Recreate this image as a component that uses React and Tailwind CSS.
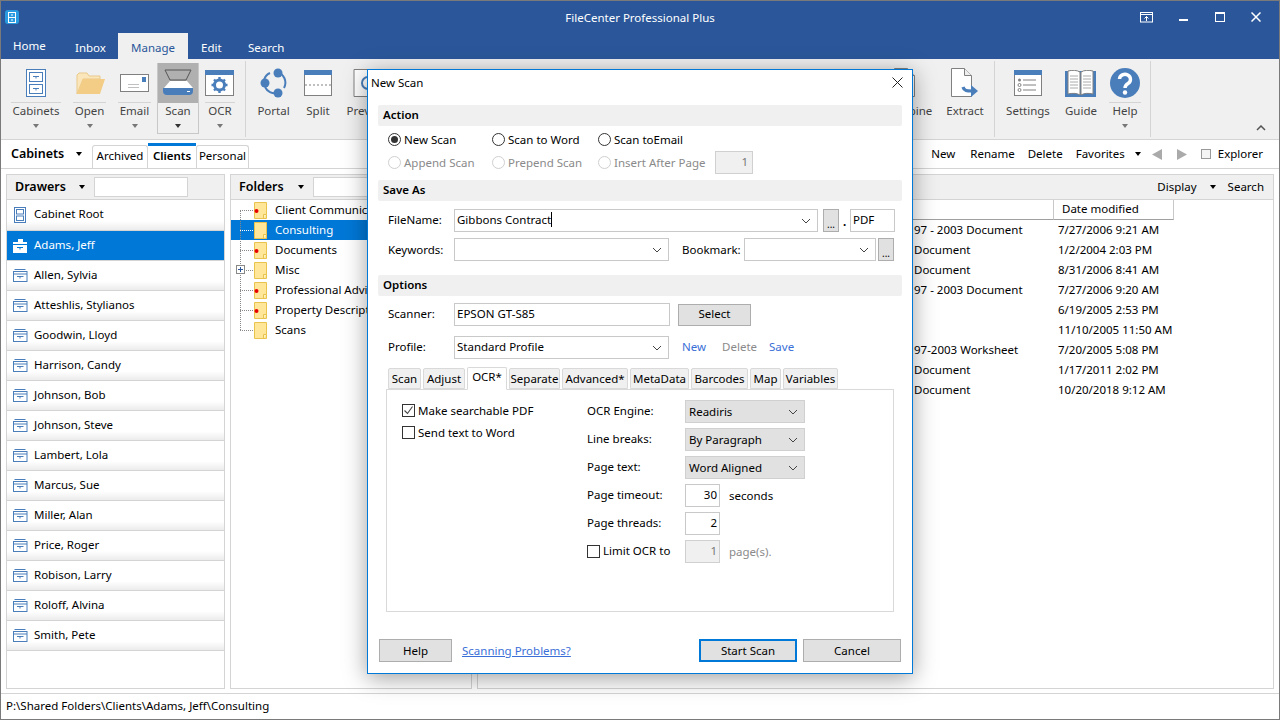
import React from "react";

const BLUE = "#4a7ebb";

function Caret({ className = "" }) {
  return <span className={"inline-block w-0 h-0 border-l-[3.5px] border-r-[3.5px] border-t-[4px] border-l-transparent border-r-transparent " + className} />;
}

function Chevron({ className = "" }) {
  return (
    <svg width="10" height="6" viewBox="0 0 10 6" className={className}>
      <path d="M1 1l4 4 4-4" fill="none" stroke="#444" strokeWidth="1" />
    </svg>
  );
}

/* ---------- ribbon icons ---------- */
const CabinetIcon = () => (
  <svg width="22" height="30" viewBox="0 0 22 30">
    <rect x="1.5" y="1.5" width="19" height="27" fill="#fff" stroke={BLUE} />
    <rect x="4.5" y="4.5" width="13" height="9" fill="#fff" stroke={BLUE} />
    <rect x="4.5" y="16.5" width="13" height="9" fill="#fff" stroke={BLUE} />
    <path d="M8 8.5h6M11 8.5v2M8 20.5h6M11 20.5v2" stroke={BLUE} fill="none" />
  </svg>
);
const OpenIcon = () => (
  <svg width="32" height="26" viewBox="0 0 32 26">
    <path d="M3 24V5l2-2h8l2 3h11v3H9L3 24z" fill="#fbe6bb" stroke="#e9c98a" />
    <path d="M3 24l6-15h22l-5 15H3z" fill="#f3cd85" />
  </svg>
);
const EmailIcon = () => (
  <svg width="30" height="20" viewBox="0 0 30 20">
    <rect x="0.5" y="1.5" width="28" height="17" fill="#fff" stroke="#808080" />
    <rect x="22" y="4" width="4" height="5" fill={BLUE} />
    <path d="M8 11.5h11M8 14.5h11" stroke="#c0c0c0" />
  </svg>
);
const ScanIcon = () => (
  <svg width="32" height="30" viewBox="0 0 32 30">
    <path d="M3 2h26l-5 10H8z" fill="none" stroke="#555" />
    <path d="M2 20l6-7h17l6 7z" fill="#fff" />
    <path d="M1 20h30v3a4 4 0 0 1-4 4H5a4 4 0 0 1-4-4z" fill={BLUE} />
    <rect x="25" y="23" width="3" height="1" fill="#fff" />
  </svg>
);
const OcrIcon = () => (
  <svg width="30" height="26" viewBox="0 0 30 26">
    <rect x="0.5" y="0.5" width="28" height="25" fill="#fff" stroke="#808080" />
    <rect x="0" y="0" width="29" height="5" fill={BLUE} />
    <circle cx="14.5" cy="15" r="5" fill="none" stroke={BLUE} strokeWidth="3" />
    <path d="M14.5 7v3M14.5 20v3M6.5 15h3M19.5 15h3M9 9.5l2 2M18 18.5l2 2M20 9.5l-2 2M11 18.5l-2 2" stroke={BLUE} strokeWidth="2.4" />
  </svg>
);
const PortalIcon = () => (
  <svg width="28" height="30" viewBox="0 0 28 30">
    <path d="M17 4a11 11 0 0 1 7 16M17 25a11 11 0 0 1-12-6M4 12a11 11 0 0 1 6-7" fill="none" stroke={BLUE} strokeWidth="2" />
    <circle cx="18" cy="5" r="4.5" fill={BLUE} />
    <circle cx="5" cy="15" r="4.5" fill={BLUE} />
    <circle cx="18" cy="25" r="4.5" fill={BLUE} />
  </svg>
);
const SplitIcon = () => (
  <svg width="28" height="26" viewBox="0 0 28 26">
    <rect x="0.5" y="0.5" width="27" height="25" fill="#fff" stroke="#808080" />
    <rect x="0" y="0" width="28" height="5" fill={BLUE} />
    <path d="M1 15h26" stroke="#808080" strokeDasharray="2 2" />
  </svg>
);
const PreviewIcon = () => (
  <svg width="30" height="28" viewBox="0 0 30 28">
    <path d="M1 .5h22v27H1z" fill="#fff" stroke="#808080" />
    <circle cx="15" cy="14" r="6" fill="none" stroke={BLUE} strokeWidth="2" />
  </svg>
);
const DocIcon = ({ arrow }) => (
  <svg width="30" height="30" viewBox="0 0 30 30">
    <path d="M1.5.5h13l7 7v21h-20z" fill="#fff" stroke="#808080" />
    <path d="M14.5.5v7h7" fill="#eee" stroke="#808080" />
    {arrow && (
      <>
        <path d="M13 19c1 4 4 4 9 4" fill="none" stroke={BLUE} strokeWidth="3.2" />
        <path d="M21 17l7 6-7 6z" fill={BLUE} />
      </>
    )}
  </svg>
);
const SettingsIcon = () => (
  <svg width="28" height="26" viewBox="0 0 28 26">
    <rect x="0.5" y="0.5" width="27" height="25" fill="#fff" stroke="#808080" />
    <rect x="0" y="0" width="28" height="5" fill={BLUE} />
    <circle cx="5.5" cy="10" r="1.5" fill="#808080" />
    <circle cx="5.5" cy="15" r="1.5" fill="none" stroke="#808080" />
    <circle cx="5.5" cy="20" r="1.5" fill="none" stroke="#808080" />
    <path d="M9 10h13M9 15h13M9 20h13" stroke="#808080" />
  </svg>
);
const GuideIcon = () => (
  <svg width="32" height="27" viewBox="0 0 32 27">
    <rect x="0" y="1" width="31" height="26" fill={BLUE} />
    <path d="M3 1c4-1 9-1 12 1v23c-3-2-8-2-12-1zM28 1c-4-1-9-1-12 1v23c3-2 8-2 12-1z" fill="#fff" stroke="#808080" />
    <path d="M5 6h8M5 9h8M5 12h8M5 15h8M5 18h8M18 6h8M18 9h8M18 12h8M18 15h8M18 18h8" stroke="#aaa" />
  </svg>
);
const HelpIcon = () => (
  <svg width="30" height="30" viewBox="0 0 30 30">
    <circle cx="15" cy="15" r="15" fill={BLUE} />
    <path d="M9.5 11a5.5 5 0 1 1 8.5 4.5c-2 1.3-3 2-3 4.5" fill="none" stroke="#fff" strokeWidth="3.4" />
    <circle cx="15" cy="24.5" r="2.2" fill="#fff" />
  </svg>
);

function RibbonItem({ w, icon, label, caret, active, line }) {
  return (
    <div className={w + " shrink-0 h-[71px] flex flex-col items-center " + (active ? "border border-t-0 border-[#c8c8c8]" : "")}>
      <div className={"w-full h-[40px] shrink-0 flex items-center justify-center " + (active ? "bg-[#b0b0b0]" : "") + (line ? " border-b border-[#d4d4d4]" : "")}>
        {icon}
      </div>
      <div className="h-[18px] leading-[15px] text-[11.5px] text-[#444] whitespace-nowrap">{label}</div>
      {caret && <Caret className={"mt-[3px] " + (active ? "border-t-[#333]" : "border-t-[#777]")} />}
    </div>
  );
}

const RibbonSep = () => <div className="w-px h-[76px] -mt-[2px] shrink-0 bg-[#d4d4d4]" />;

/* ---------- list icons ---------- */
const DrawerIcon = ({ selected }) =>
  selected ? (
    <svg width="15" height="14" viewBox="0 0 15 14" className="shrink-0">
      <path d="M5 0h5v3H5z" fill="#fff" />
      <path d="M0 3h14v11H0z" fill="#fff" />
      <path d="M0 5.5h14" stroke="#0078d7" />
      <path d="M4 8.5h6M7 8.5v2" stroke="#0078d7" />
    </svg>
  ) : (
    <svg width="15" height="13" viewBox="0 0 15 13" className="shrink-0">
      <path d="M1.5.5h11" stroke={BLUE} />
      <rect x="0.5" y="2.5" width="13.5" height="10" fill="#fff" stroke={BLUE} />
      <path d="M0 5h14M4 7.5h6.5M7 7.5v2" stroke={BLUE} />
    </svg>
  );

const RootIcon = () => (
  <svg width="13" height="16" viewBox="0 0 13 16" className="shrink-0">
    <rect x="0.5" y="0.5" width="11" height="15" fill="#fff" stroke={BLUE} />
    <rect x="2.5" y="2.5" width="7" height="4.5" fill="#fff" stroke={BLUE} />
    <rect x="2.5" y="9" width="7" height="4.5" fill="#fff" stroke={BLUE} />
  </svg>
);

const FolderIcon = ({ dot }) => (
  <svg width="14" height="17" viewBox="0 0 14 17" className="shrink-0 relative">
    <path d="M.5.5h12v16H.5z" fill="#ffe699" stroke="#e8c44f" />
    <path d="M9.5 16.5v-4h3" fill="#fff2c4" stroke="#e8c44f" />
    {dot && <circle cx="2.5" cy="9" r="2" fill="#e80000" />}
  </svg>
);

const drawers = ["Allen, Sylvia", "Atteshlis, Stylianos", "Goodwin, Lloyd", "Harrison, Candy", "Johnson, Bob", "Johnson, Steve", "Lambert, Lola", "Marcus, Sue", "Miller, Alan", "Price, Roger", "Robison, Larry", "Roloff, Alvina", "Smith, Pete"];

const folders = [
  { n: "Client Communications", d: true },
  { n: "Consulting", s: true },
  { n: "Documents", d: true },
  { n: "Misc", p: true },
  { n: "Professional Advisors", d: true },
  { n: "Property Descriptions", d: true },
  { n: "Scans" },
];

const files = [
  ["97 - 2003 Document", "7/27/2006 9:21 AM"],
  ["Document", "1/2/2004 2:03 PM"],
  ["Document", "8/31/2006 8:41 AM"],
  ["97 - 2003 Document", "7/27/2006 9:20 AM"],
  ["", "6/19/2005 2:53 PM"],
  ["", "11/10/2005 11:50 AM"],
  ["97-2003 Worksheet", "7/20/2005 5:08 PM"],
  ["Document", "1/17/2011 2:02 PM"],
  ["Document", "10/20/2018 9:12 AM"],
];

/* ---------- dialog bits ---------- */
function Section({ children }) {
  return <div className="h-[21px] leading-[20px] mx-[10px] pl-[5px] bg-[#f0f0f0] rounded-[2px] text-[11.5px] font-semibold text-black">{children}</div>;
}

function Radio({ w, label, checked, disabled }) {
  return (
    <div className={w + " flex items-center gap-[3px] text-[11.5px] " + (disabled ? "text-[#8a8a8a]" : "text-black")}>
      <span className={"w-[13px] h-[13px] rounded-full border bg-white flex items-center justify-center shrink-0 " + (disabled ? "border-[#cfcfcf]" : "border-[#333]")}>
        {checked && <span className="w-[7px] h-[7px] rounded-full bg-[#333]" />}
      </span>
      <span className="whitespace-nowrap">{label}</span>
    </div>
  );
}

function Check({ label, checked }) {
  return (
    <div className="h-[13px] flex items-center gap-[3px] text-[11.5px] text-black">
      <span className="w-[13px] h-[13px] border border-[#333] bg-white flex items-center justify-center shrink-0">
        {checked && (
          <svg width="11" height="11" viewBox="0 0 11 11">
            <path d="M1.5 5.5l3 3 5-7" fill="none" stroke="#444" strokeWidth="1.1" />
          </svg>
        )}
      </span>
      <span className="whitespace-nowrap">{label}</span>
    </div>
  );
}

function Combo({ w, value }) {
  return (
    <div className={w + " h-[23px] border border-[#c9c9c9] bg-white flex items-center pl-[2px] pr-[6px] text-[11.5px] text-black shrink-0"}>
      <span className="flex-1 whitespace-nowrap flex items-center pb-[2px]">{value}</span>
      <Chevron />
    </div>
  );
}

function GrayCombo({ value }) {
  return (
    <div className="w-[120px] h-[23px] border border-[#d0d0d0] bg-[#e1e1e1] flex items-center pl-[3px] pr-[6px] text-[11.5px] text-black shrink-0">
      <span className="flex-1 whitespace-nowrap">{value}</span>
      <Chevron />
    </div>
  );
}

function Btn({ w, children, cls = "" }) {
  return <div className={w + " h-[23px] shrink-0 bg-[#e1e1e1] border border-[#adadad] flex items-center justify-center text-[11.5px] text-black " + cls}>{children}</div>;
}

const Dots = () => <div className="w-[16px] h-[23px] shrink-0 bg-[#e1e1e1] border border-[#adadad] flex items-end justify-center text-[10px] leading-[14px] text-black">...</div>;

function Tab({ w, label, active }) {
  return (
    <div className={w + " shrink-0 border border-[#d9d9d9] rounded-t-[2px] flex items-center justify-center text-[11.5px] text-black whitespace-nowrap " + (active ? "h-[23px] bg-white border-b-white -mb-px pb-[3px] relative" : "h-[21px] bg-[#f0f0f0]")}>
      {label}
    </div>
  );
}

function OcrRow({ label, children }) {
  return (
    <div className="h-[23px] mb-[5px] flex items-center text-[11.5px] text-black">
      <div className="w-[98px] shrink-0 whitespace-nowrap pb-[1px]">{label}</div>
      {children}
    </div>
  );
}

function Dialog() {
  return (
    <div className="absolute left-[366px] top-[68px] w-[546px] h-[605px] bg-white border border-[#0078d7] shadow-[0_4px_22px_rgba(0,0,0,0.38)]">
      <div className="h-[25px] flex items-center justify-between pl-[3px] pr-[9px] text-[11.5px] text-black">
        <span>New Scan</span>
        <svg width="11" height="11" viewBox="0 0 11 11">
          <path d="M.5.5l10 10M10.5.5l-10 10" stroke="#222" strokeWidth="1" fill="none" />
        </svg>
      </div>
      <div className="h-[10px]" />
      <Section>Action</Section>
      <div className="pl-[20px] pt-[2px]">
        <div className="flex h-[23px] items-center">
          <Radio w="w-[104px]" label="New Scan" checked />
          <Radio w="w-[106px]" label="Scan to Word" />
          <Radio w="w-[117px]" label="Scan toEmail" />
        </div>
        <div className="flex h-[23px] items-center">
          <Radio w="w-[104px]" label="Append Scan" disabled />
          <Radio w="w-[106px]" label="Prepend Scan" disabled />
          <Radio w="w-[117px]" label="Insert After Page" disabled />
          <div className="w-[38px] h-[23px] border border-[#d0d0d0] bg-[#f0f0f0] text-[11.5px] text-[#777] text-right pr-[4px] leading-[20px]">1</div>
        </div>
      </div>
      <div className="h-[6px]" />
      <Section>Save As</Section>
      <div className="pl-[20px] pt-[8px]">
        <div className="flex items-center h-[23px] text-[11.5px] text-black">
          <div className="w-[66px] shrink-0 pb-[1px]">FileName:</div>
          <Combo w="w-[364px]" value={<><span>Gibbons Contract</span><span className="w-px h-[15px] bg-black" /></>} />
          <div className="ml-[5px]"><Dots /></div>
          <div className="w-[11px] text-center font-bold leading-[26px] pt-[2px]">.</div>
          <div className="w-[45px] h-[23px] border border-[#c9c9c9] pl-[2px] leading-[19px]">PDF</div>
        </div>
        <div className="flex items-center h-[23px] mt-[6px] text-[11.5px] text-black">
          <div className="w-[66px] shrink-0">Keywords:</div>
          <Combo w="w-[215px]" value="" />
          <div className="w-[75px] pl-[13px] shrink-0">Bookmark:</div>
          <Combo w="w-[132px]" value="" />
          <div className="ml-[2px]"><Dots /></div>
        </div>
      </div>
      <div className="h-[14px]" />
      <Section>Options</Section>
      <div className="pl-[20px] pt-[7px]">
        <div className="flex items-center h-[23px] text-[11.5px] text-black">
          <div className="w-[66px] shrink-0 pb-[1px]">Scanner:</div>
          <div className="w-[216px] h-[23px] border border-[#c9c9c9] pl-[2px] leading-[19px]">EPSON GT-S85</div>
          <Btn w="w-[73px]" cls="ml-[8px] !h-[22px] pb-[1px]">Select</Btn>
        </div>
        <div className="flex items-center h-[23px] mt-[10px] text-[11.5px] text-black">
          <div className="w-[66px] shrink-0 pb-[2px]">Profile:</div>
          <Combo w="w-[215px]" value="Standard Profile" />
          <span className="ml-[13px] text-[#3a6fd8] pb-[1px]">New</span>
          <span className="ml-[16px] text-[#8a8a8a] pb-[1px]">Delete</span>
          <span className="ml-[12px] text-[#3a6fd8] pb-[1px]">Save</span>
        </div>
      </div>
      <div className="flex items-end gap-[2px] pl-[20px] h-[22px] mt-[8px] relative z-10">
        <Tab w="w-[33px]" label="Scan" />
        <Tab w="w-[42px]" label="Adjust" />
        <Tab w="w-[40px]" label="OCR*" active />
        <Tab w="w-[51px]" label="Separate" />
        <Tab w="w-[66px]" label="Advanced*" />
        <Tab w="w-[59px]" label="MetaData" />
        <Tab w="w-[57px]" label="Barcodes" />
        <Tab w="w-[31px]" label="Map" />
        <Tab w="w-[55px]" label="Variables" />
      </div>
      <div className="ml-[18px] w-[508px] h-[223px] border border-[#d9d9d9] flex pt-[10px]">
        <div className="w-[200px] pl-[15px] pt-[4px] shrink-0">
          <Check label="Make searchable PDF" checked />
          <div className="h-[9px]" />
          <Check label="Send text to Word" />
        </div>
        <div>
          <OcrRow label="OCR Engine:"><GrayCombo value="Readiris" /></OcrRow>
          <OcrRow label="Line breaks:"><GrayCombo value="By Paragraph" /></OcrRow>
          <OcrRow label="Page text:"><GrayCombo value="Word Aligned" /></OcrRow>
          <OcrRow label="Page timeout:">
            <div className="w-[35px] h-[23px] border border-[#c9c9c9] text-right pr-[2px] leading-[19px]">30</div>
            <span className="ml-[9px]">seconds</span>
          </OcrRow>
          <OcrRow label="Page threads:">
            <div className="w-[35px] h-[23px] border border-[#c9c9c9] text-right pr-[2px] leading-[19px]">2</div>
          </OcrRow>
          <OcrRow label={<Check label="Limit OCR to" />}>
            <div className="w-[35px] h-[23px] border border-[#d0d0d0] bg-[#f0f0f0] text-[#777] text-right pr-[2px] leading-[19px]">1</div>
            <span className="ml-[9px] text-[#8a8a8a]">page(s).</span>
          </OcrRow>
        </div>
      </div>
      <div className="flex items-center mt-[27px] pl-[11px] text-[11.5px]">
        <Btn w="w-[73px]">Help</Btn>
        <span className="ml-[10px] text-[#3a6fd8] underline">Scanning Problems?</span>
        <div className="flex-1" />
        <Btn w="w-[98px]" cls="!border-2 !border-[#0078d7]">Start Scan</Btn>
        <Btn w="w-[98px]" cls="ml-[6px] mr-[11px]">Cancel</Btn>
      </div>
    </div>
  );
}

export default function App() {
  return (
    <div className="relative w-[1280px] h-[720px] overflow-hidden border border-[#7a7a7a] bg-[#f0f0f0] flex flex-col text-black font-['Noto_Sans','Open_Sans',sans-serif] text-[11.5px]">
      {/* title */}
      <div className="h-[32px] shrink-0 bg-[#2b579a] flex items-center">
        <div className="w-[150px] shrink-0 pl-[4px]">
          <div className="w-[14px] h-[14px] rounded-[3px] bg-[#2a9be0] flex items-center justify-center">
            <svg width="8" height="11" viewBox="0 0 8 11">
              <rect x=".5" y=".5" width="7" height="10" fill="none" stroke="#fff" />
              <path d="M.5 5.5h7M3 3h2M3 8h2" stroke="#fff" />
            </svg>
          </div>
        </div>
        <div className="flex-1 text-center text-white text-[11.5px] pt-[1px]">FileCenter Professional Plus</div>
        <div className="w-[150px] shrink-0 flex items-center justify-end pr-[18px]">
          <svg width="14" height="11" viewBox="0 0 14 11">
            <rect x=".5" y=".5" width="12" height="9.5" fill="none" stroke="#fff" />
            <path d="M1 2.5h11" stroke="#fff" />
            <path d="M6.5 9V4.5M4.5 6.5l2-2 2 2" stroke="#fff" fill="none" />
          </svg>
          <div className="ml-[25px] w-[9px] h-[2px] bg-white mt-[5px]" />
          <div className="ml-[27px] w-[10px] h-[10px] border border-white border-t-2" />
          <svg width="10" height="10" viewBox="0 0 10 10" className="ml-[26px]">
            <path d="M.5.5l9 9M9.5.5l-9 9" stroke="#fff" strokeWidth="1.5" />
          </svg>
        </div>
      </div>
      {/* ribbon tabs */}
      <div className="h-[26px] shrink-0 bg-[#2b579a] flex items-end text-white text-[11.5px]">
        <div className="w-[74px] pl-[12px] h-full leading-[25px]">Home</div>
        <div className="w-[43px] h-full leading-[29px]">Inbox</div>
        <div className="w-[70px] h-full bg-[#f0f0f0] text-[#2b579a] text-center leading-[29px]">Manage</div>
        <div className="w-[47px] h-full pl-[13px] leading-[29px]">Edit</div>
        <div className="h-full leading-[29px] pl-[13px]">Search</div>
      </div>
      {/* ribbon */}
      <div className="h-[81px] shrink-0 bg-[#f0f0f0] border-b border-[#d4d4d4] flex items-start pt-[4px] pl-[10px] pr-[8px]">
        <RibbonItem w="w-[50px]" icon={<CabinetIcon />} label="Cabinets" caret line />
        <div className="w-[12px] shrink-0" />
        <RibbonItem w="w-[33px]" icon={<OpenIcon />} label="Open" caret line />
        <div className="w-[12px] shrink-0" />
        <RibbonItem w="w-[33px]" icon={<EmailIcon />} label="Email" caret line />
        <div className="w-[6px] shrink-0" />
        <RibbonItem w="w-[42px]" icon={<ScanIcon />} label="Scan" caret active />
        <div className="w-[6px] shrink-0" />
        <RibbonItem w="w-[30px]" icon={<OcrIcon />} label="OCR" caret line />
        <div className="w-[10px] shrink-0" />
        <RibbonSep />
        <div className="w-[12px] shrink-0" />
        <RibbonItem w="w-[31px]" icon={<PortalIcon />} label="Portal" />
        <div className="w-[15px] shrink-0" />
        <RibbonItem w="w-[28px]" icon={<SplitIcon />} label="Split" />
        <div className="w-[13px] shrink-0" />
        <RibbonItem w="w-[45px]" icon={<PreviewIcon />} label="Preview" />
        <div className="flex-1" />
        <RibbonItem w="w-[50px]" icon={<DocIcon />} label="Combine" />
        <div className="w-[12px] shrink-0" />
        <RibbonItem w="w-[40px]" icon={<DocIcon arrow />} label="Extract" />
        <div className="w-[9px] shrink-0" />
        <RibbonSep />
        <div className="w-[8px] shrink-0" />
        <RibbonItem w="w-[50px]" icon={<SettingsIcon />} label="Settings" />
        <div className="w-[10px] shrink-0" />
        <RibbonItem w="w-[36px]" icon={<GuideIcon />} label="Guide" />
        <div className="w-[10px] shrink-0" />
        <RibbonItem w="w-[32px]" icon={<HelpIcon />} label="Help" caret line />
        <div className="w-[9px] shrink-0" />
        <RibbonSep />
        <div className="w-[120px] shrink-0 flex justify-end pr-[5px] pt-[62px]">
          <svg width="10" height="6" viewBox="0 0 10 6">
            <path d="M1 5l4-4 4 4" fill="none" stroke="#555" strokeWidth="1.5" />
          </svg>
        </div>
      </div>
      {/* toolbar */}
      <div className="h-[29px] shrink-0 bg-white border-b border-[#d4d4d4] flex items-end text-[11.5px]">
        <div className="w-[91px] h-full flex items-center pl-[10px]">
          <span className="text-[12.5px] font-semibold">Cabinets</span>
          <Caret className="ml-[12px] border-t-black" />
        </div>
        <div className="w-[56px] h-[23px] border border-b-0 border-[#d4d4d4] rounded-t-[3px] flex items-center justify-center pb-[3px]">Archived</div>
        <div className="w-[48px] h-[25px] bg-white border-t-[3px] border-[#0078d7] flex items-center justify-center font-semibold pb-[3px]">Clients</div>
        <div className="w-[53px] h-[23px] border border-b-0 border-[#d4d4d4] rounded-t-[3px] flex items-center justify-center pb-[3px]">Personal</div>
        <div className="flex-1" />
        <div className="h-full flex items-center pr-[16px]">
          <span>New</span>
          <span className="ml-[15px]">Rename</span>
          <span className="ml-[13px]">Delete</span>
          <span className="ml-[13px]">Favorites</span>
          <Caret className="ml-[10px] border-t-black" />
          <svg width="10" height="11" viewBox="0 0 10 11" className="ml-[11px]"><path d="M10 0v11L0 5.5z" fill="#aaa" /></svg>
          <svg width="10" height="11" viewBox="0 0 10 11" className="ml-[15px]"><path d="M0 0v11l10-5.5z" fill="#aaa" /></svg>
          <span className="ml-[14px] w-[10px] h-[10px] border border-[#999] bg-[#f4f4f4]" />
          <span className="ml-[7px]">Explorer</span>
        </div>
      </div>
      {/* panels */}
      <div className="flex-1 min-h-0 bg-white flex gap-[5px] px-[5px] pt-[5px] pb-[4px]">
        <div className="w-[219px] shrink-0 border border-[#d4d4d4] flex flex-col">
          <div className="h-[25px] shrink-0 bg-[#f0f0f0] border-b border-[#d4d4d4] flex items-center pl-[8px]">
            <span className="w-[52px] text-[12.5px] font-semibold">Drawers</span>
            <Caret className="ml-[12px] border-t-black" />
            <div className="ml-[9px] w-[94px] h-[20px] bg-white border border-[#d4d4d4]" />
          </div>
          <div className="h-[31px] shrink-0 flex items-center gap-[7px] pl-[7px] border-b border-[#d4d4d4] bg-gradient-to-b from-white from-70% to-[#ececec]">
            <RootIcon />
            <span className="pb-[2px]">Cabinet Root</span>
          </div>
          <div className="h-[30px] shrink-0 flex items-center gap-[6px] pl-[6px] bg-[#0078d7] text-white border-b border-[#d4d4d4]">
            <DrawerIcon selected />
            <span className="pb-[2px]">Adams, Jeff</span>
          </div>
          {drawers.map((d) => (
            <div key={d} className="h-[30px] shrink-0 flex items-center gap-[6px] pl-[6px] border-b border-[#d4d4d4] bg-gradient-to-b from-white from-70% to-[#ececec]">
              <DrawerIcon />
              <span className="pb-[2px]">{d}</span>
            </div>
          ))}
        </div>
        <div className="w-[242px] shrink-0 border border-[#d4d4d4] flex flex-col">
          <div className="h-[25px] shrink-0 bg-[#f0f0f0] border-b border-[#d4d4d4] flex items-center pl-[8px]">
            <span className="w-[52px] text-[12.5px] font-semibold">Folders</span>
            <Caret className="ml-[7px] border-t-black" />
            <div className="ml-[9px] w-[94px] h-[20px] bg-white border border-[#d4d4d4]" />
          </div>
          <div className="relative">
            {/* dotted tree trunk lies over the rows */}
            <div className="absolute left-[9px] top-[10px] h-[120px] border-l border-dotted border-[#888] z-10" />
            {folders.map((f) => (
              <div key={f.n} className={"h-[20px] flex items-center relative " + (f.s ? "bg-[#0078d7] text-white" : "")}>
                <div className={"ml-[9px] w-[13px] border-t border-dotted " + (f.s ? "border-white" : "border-[#888]")} />
                {f.p && (
                  <div className="absolute left-[5px] top-[5px] w-[9px] h-[9px] border border-[#888] bg-white flex items-center justify-center z-20">
                    <div className="relative w-[5px] h-px bg-[#2b579a]"><div className="absolute left-[2px] -top-[2px] w-px h-[5px] bg-[#2b579a]" /></div>
                  </div>
                )}
                <div className="ml-[1px]"><FolderIcon dot={f.d} /></div>
                <span className="ml-[7px] whitespace-nowrap pb-[1px]">{f.n}</span>
              </div>
            ))}
          </div>
        </div>
        <div className="flex-1 min-w-0 border border-[#d4d4d4] flex flex-col">
          <div className="h-[25px] shrink-0 bg-[#f0f0f0] border-b border-[#d4d4d4] flex items-center justify-end pr-[9px]">
            <span className="pb-[1px]">Display</span>
            <Caret className="ml-[13px] border-t-black" />
            <span className="ml-[12px] pb-[1px]">Search</span>
          </div>
          <div className="h-[20px] shrink-0 flex">
            <div className="w-[575px] shrink-0 border-b border-[#a0a0a0]" />
            <div className="w-[121px] shrink-0 border-x border-b border-x-[#c8c8c8] border-b-[#a0a0a0] pl-[8px] leading-[18px]">Date modified</div>
          </div>
          {files.map((r, i) => (
            <div key={i} className="h-[20px] shrink-0 flex items-center">
              <div className="w-[580px] shrink-0 pl-[436px] whitespace-nowrap">{r[0]}</div>
              <div className="whitespace-nowrap">{r[1]}</div>
            </div>
          ))}
        </div>
      </div>
      {/* status */}
      <div className="h-[26px] shrink-0 bg-white border-t border-[#d4d4d4] pl-[5px] leading-[24px] text-[11.5px]">P:\Shared Folders\Clients\Adams, Jeff\Consulting</div>
      <Dialog />
    </div>
  );
}
